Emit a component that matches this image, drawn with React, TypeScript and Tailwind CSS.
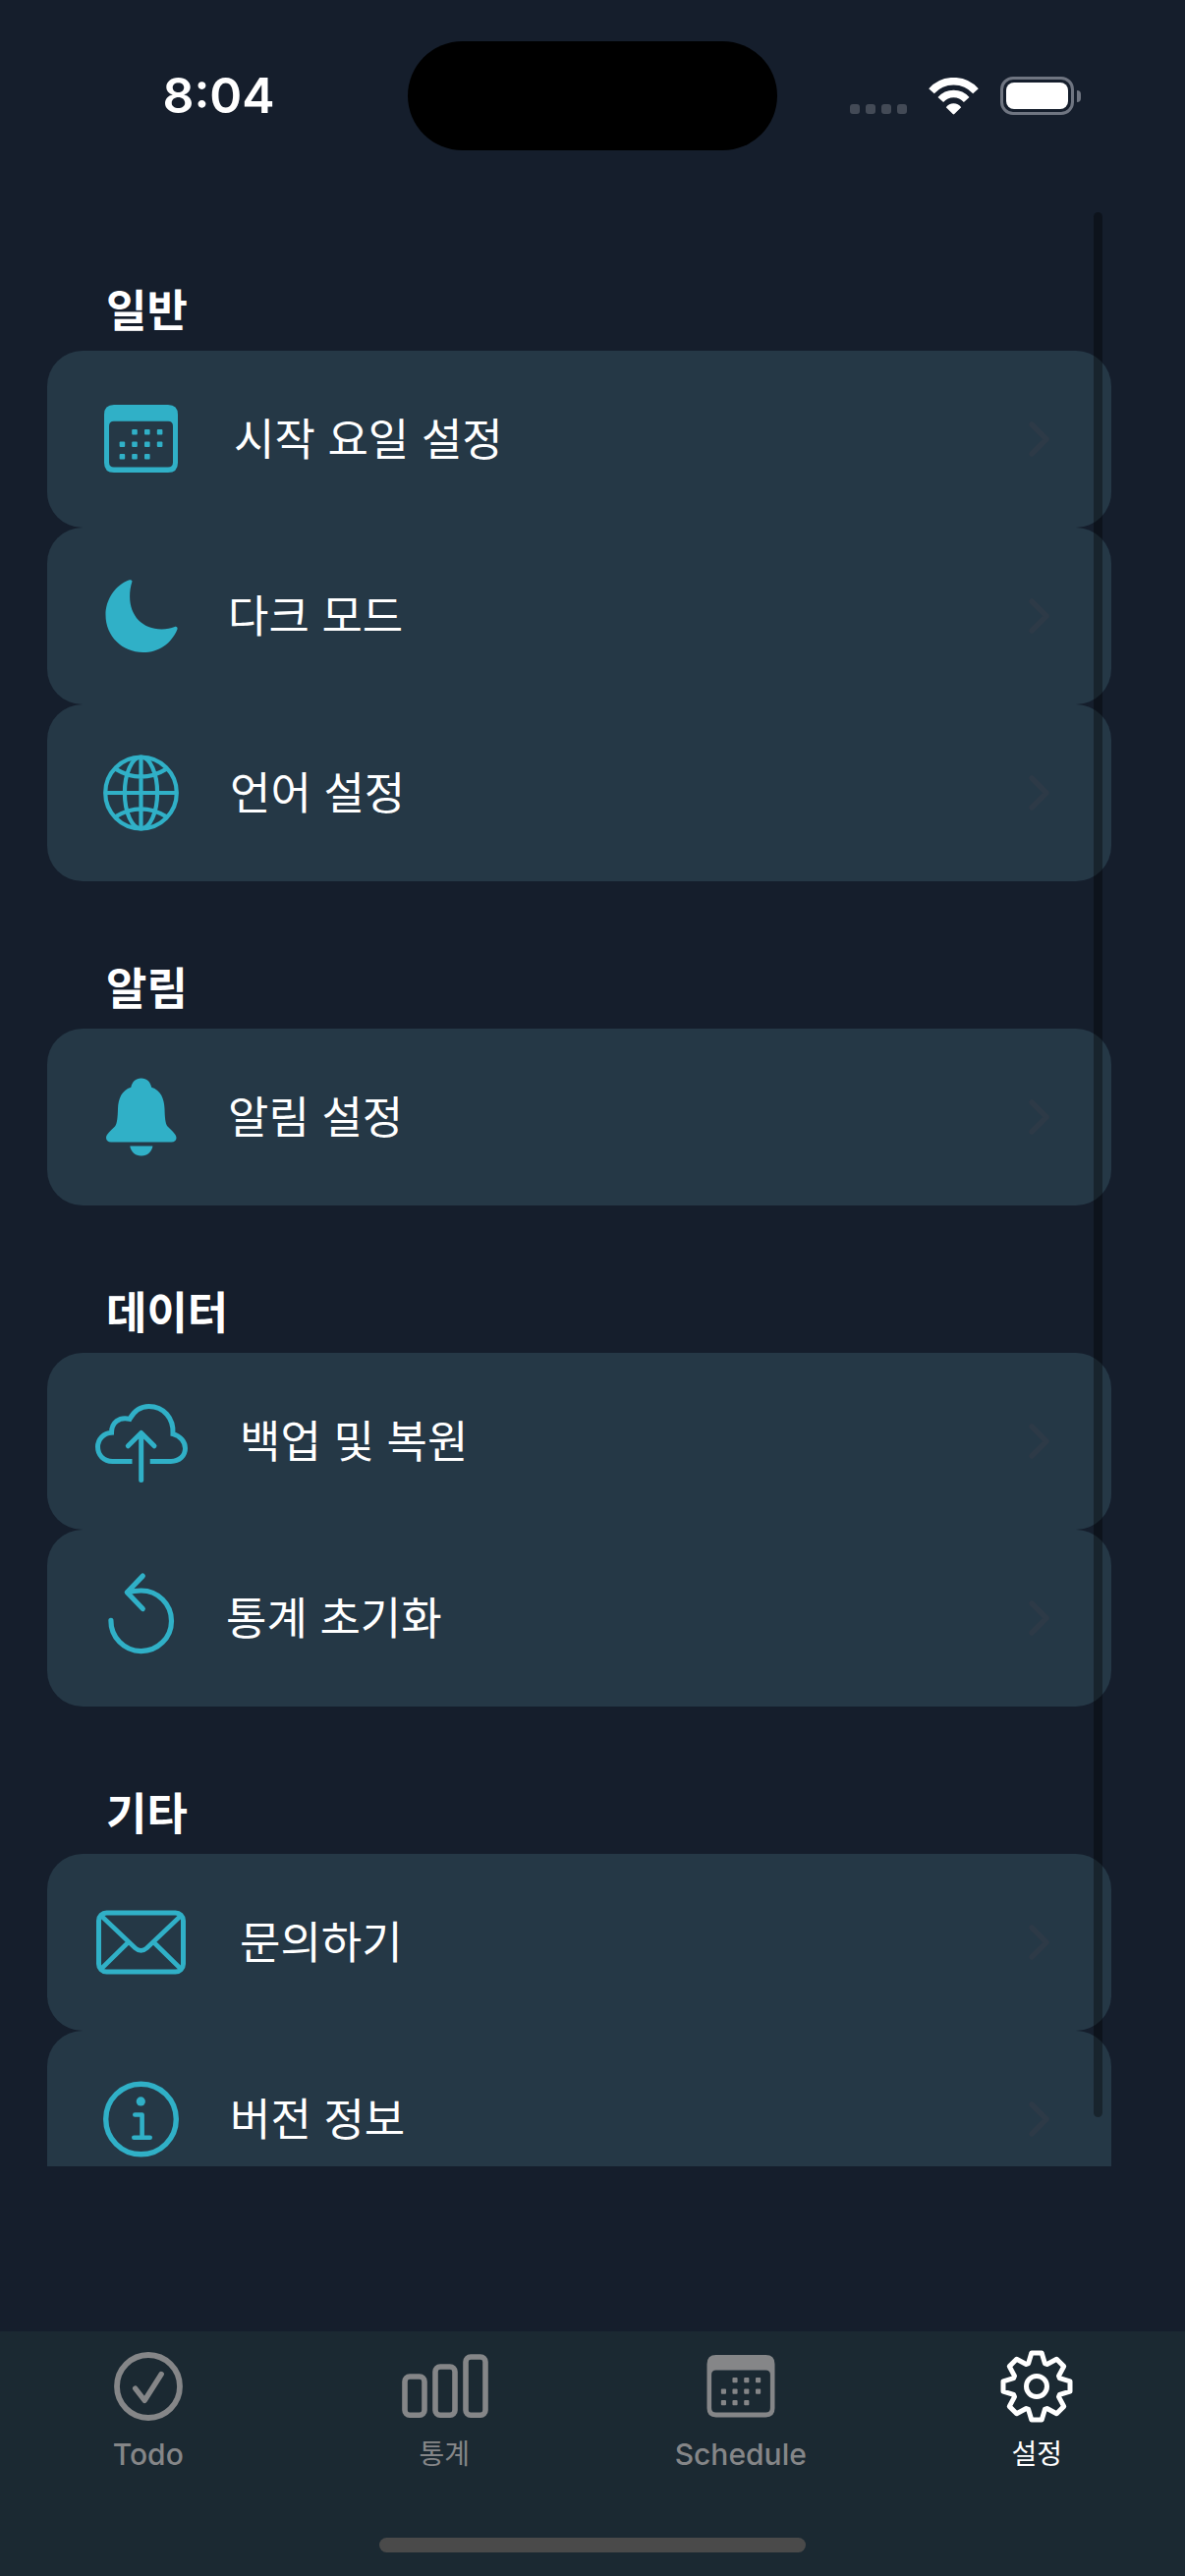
import type { ReactNode } from "react";

const FONT = "font-['Inter','Noto_Sans_CJK_KR',sans-serif]";

function Icon({ children }: { children: ReactNode }) {
  return (
    <svg
      viewBox="0 0 96 96"
      className="size-24 shrink-0 text-[#30b0c7]"
      fill="none"
      stroke="currentColor"
      strokeWidth="5"
      aria-hidden="true"
    >
      {children}
    </svg>
  );
}

/* Calendar glyph drawn on a 75 x 69 field, shared by the list and the tab bar. */
function CalendarShape() {
  const rows = [
    [28.2, 41, 53.8],
    [15.6, 28.2, 41, 53.8],
    [15.6, 28.2, 41],
  ];
  return (
    <g stroke="none" fill="currentColor">
      <path
        fillRule="evenodd"
        d="M10 0H65Q75 0 75 10V59Q75 69 65 69H10Q0 69 0 59V10Q0 0 10 0ZM10 16.8Q5 16.8 5 21.8V58.6Q5 63.6 10 63.6H65Q70 63.6 70 58.6V21.8Q70 16.8 65 16.8Z"
      />
      {rows.map((cols, r) =>
        cols.map((x) => (
          <rect key={`${r}-${x}`} x={x} y={25 + r * 12.5} width="5.6" height="5.6" rx="1" />
        )),
      )}
    </g>
  );
}

const icons = {
  calendar: (
    <Icon>
      <g transform="translate(10 13)">
        <CalendarShape />
      </g>
    </Icon>
  ),
  moon: (
    <Icon>
      <path
        transform="translate(11.5 11)"
        stroke="none"
        fill="currentColor"
        d="M26.8 2.5C25.3 7 24.6 12 24.6 17C24.6 37 37.5 50.4 57 50.4C62 50.4 66.5 49.2 70.3 48C72 47.5 73.6 48.5 73 50.4C67 65 54 74 38.2 74C17 74 0 57.5 0 36C0 20 10 5.5 24.3 0.3C26.3 -0.3 27.5 1 26.8 2.5Z"
      />
    </Icon>
  ),
  globe: (
    <Icon>
      <g transform="translate(9 9.5)" strokeWidth="4.2">
        <circle cx="38.5" cy="38.5" r="36.3" />
        <ellipse cx="38.5" cy="38.5" rx="16.6" ry="36.3" />
        <path d="M38.5 2V75M2 38.5H75M12.9 14.4Q38.5 30 64.1 14.4M12.9 62.6Q38.5 47 64.1 62.6" />
      </g>
    </Icon>
  ),
  bell: (
    <Icon>
      <g transform="translate(12 8.5)" stroke="none" fill="currentColor">
        <path d="M35.7 0C30 0 26.5 3.5 25.3 9.3C16 12 12.3 21 12 31C11.7 40 11.3 46 9 49C5 53 0 57 0 60.5C0 63.3 2 65 5 65H66.5C69.5 65 71.5 63.3 71.5 60.5C71.5 57 66.5 53 62.5 49C60.2 46 59.8 40 59.5 31C59.2 21 55.5 12 46.2 9.3C45 3.5 41.5 0 35.7 0Z" />
        <path d="M24.3 69H47.4C46.5 75 42 79 35.8 79C29.6 79 25.2 75 24.3 69Z" />
      </g>
    </Icon>
  ),
  cloud: (
    <Icon>
      <g transform="translate(1 10)">
        <path d="M37.5 58.4H17.5C8.5 58.4 2.5 52 2.5 43.8C2.5 36 8.5 29.5 16.5 29.2C16.5 19.5 24 12.5 35 15.3C39 8 46 2.5 54.5 2.5C69.5 2.5 80 14.5 79 30.6C86.5 32.5 91.5 38.5 91.5 45.3C91.5 52.8 85.5 58.4 77 58.4H55.7" />
        <path strokeLinecap="round" strokeLinejoin="round" d="M46.7 29.5V77.4M33.3 42.8L46.7 29.5L60 42.8" />
      </g>
    </Icon>
  ),
  reset: (
    <Icon>
      <g transform="translate(14 2.5)" strokeLinecap="round" strokeLinejoin="round" strokeWidth="5.2">
        <path d="M2.9 47.8A30.8 30.8 0 1 0 33.6 17.5Q26.5 17.5 20 19.3" />
        <path d="M35.3 2.6L19.3 19.3L35.3 36" />
      </g>
    </Icon>
  ),
  mail: (
    <Icon>
      <g transform="translate(2 15.5)">
        <rect x="2.5" y="2.5" width="86" height="60" rx="8" />
        <path d="M4.5 5L39.5 38.2Q45.5 43.5 51.5 38.2L86.5 5M5 59.5L33 32M86 59.5L58 32" strokeWidth="4.6" />
      </g>
    </Icon>
  ),
  info: (
    <Icon>
      <g transform="translate(9 9.5)">
        <circle cx="38.5" cy="38.5" r="35.8" strokeWidth="5.4" />
        <circle cx="38.3" cy="20.4" r="4.6" fill="currentColor" stroke="none" />
        <path d="M32.3 34H39.6V57.2M31.3 57.2H47.7" strokeWidth="4.6" strokeLinecap="round" strokeLinejoin="round" />
      </g>
    </Icon>
  ),
};

type Item = { label: string; icon: ReactNode; gap: string };

const sections: { title: string; items: Item[] }[] = [
  {
    title: "일반",
    items: [
      { label: "시작 요일 설정", icon: icons.calendar, gap: "ml-[46px]" },
      { label: "다크 모드", icon: icons.moon, gap: "ml-10" },
      { label: "언어 설정", icon: icons.globe, gap: "ml-[42px]" },
    ],
  },
  { title: "알림", items: [{ label: "알림 설정", icon: icons.bell, gap: "ml-10" }] },
  {
    title: "데이터",
    items: [
      { label: "백업 및 복원", icon: icons.cloud, gap: "ml-[52px]" },
      { label: "통계 초기화", icon: icons.reset, gap: "ml-[38px]" },
    ],
  },
  {
    title: "기타",
    items: [
      { label: "문의하기", icon: icons.mail, gap: "ml-[52px]" },
      { label: "버전 정보", icon: icons.info, gap: "ml-[42px]" },
    ],
  },
];

function Row({ label, icon, gap }: Item) {
  return (
    <li>
      <button
        type="button"
        className="flex h-[180px] w-full items-center rounded-[36px] bg-[#253846] pr-[61px] pl-12 text-left"
      >
        {icon}
        <span className={`${gap} flex-1 pt-0.5 text-[45px] leading-[60px] text-white`}>{label}</span>
        <svg viewBox="0 0 24 38" className="h-[38px] w-6" fill="none" stroke="#2d3a47" strokeWidth="5.5" strokeLinecap="round" strokeLinejoin="round" aria-hidden="true">
          <path d="M4 4L19 19L4 34" />
        </svg>
      </button>
    </li>
  );
}

function StatusBar() {
  return (
    <header className="grid h-[207px] shrink-0 grid-cols-[1fr_376px_1fr] items-start pt-[42px]">
      <div className="flex h-[111px] items-center justify-center pl-[30px] text-[50px] font-semibold text-white">
        8:04
      </div>
      <div className="h-[111px] rounded-full bg-black" />
      <div className="flex h-[111px] items-center justify-end gap-[22px] pr-[106px]">
        <div className="flex gap-1.5 pt-[26px]">
          <i className="size-2.5 rounded-[3px] bg-[#434a56]" />
          <i className="size-2.5 rounded-[3px] bg-[#434a56]" />
          <i className="size-2.5 rounded-[3px] bg-[#434a56]" />
          <i className="size-2.5 rounded-[3px] bg-[#434a56]" />
        </div>
        <svg viewBox="0 0 51 38" className="h-[38px] w-[51px]" fill="none" stroke="#fff" strokeWidth="7.5" aria-hidden="true">
          <path d="M3 13.7A30.2 30.2 0 0 1 48 13.7" />
          <path d="M12.3 22.5A17.6 17.6 0 0 1 38.7 22.5" />
          <path d="M17.8 30.2A9.5 9.5 0 0 1 33.2 30.2L26.3 37Q25.5 37.8 24.7 37Z" fill="#fff" stroke="none" />
        </svg>
        <div className="flex items-center gap-[3px]">
          <div className="h-[39px] w-[75px] rounded-[13px] border-3 border-[#6f7581] p-[3px]">
            <div className="h-full rounded-[8px] bg-white" />
          </div>
          <div className="h-3 w-1 rounded-r-full bg-[#6f7581]" />
        </div>
      </div>
    </header>
  );
}

const gearPoints = Array.from({ length: 8 }, (_, i) => i * 45)
  .flatMap((deg) => {
    const a = (deg * Math.PI) / 180;
    return [
      [-8.4, -23.4],
      [-5.2, -34],
      [5.2, -34],
      [8.4, -23.4],
    ].map(([x, y]) => `${(x * Math.cos(a) - y * Math.sin(a)).toFixed(2)},${(x * Math.sin(a) + y * Math.cos(a)).toFixed(2)}`);
  })
  .join(" ");

const LATIN = "text-[30px] font-medium";
const HANGUL = "text-[28px] font-normal";

const tabs = [
  {
    label: "Todo",
    text: LATIN,
    active: false,
    icon: (
      <svg viewBox="0 0 76 76" className="size-[76px]" fill="none" stroke="currentColor" strokeWidth="5.8" aria-hidden="true">
        <circle cx="38" cy="38" r="32" />
        <path d="M24.7 40.2L34.2 52.3L51.2 25.5" strokeLinecap="round" strokeLinejoin="round" strokeWidth="5.4" />
      </svg>
    ),
  },
  {
    label: "통계",
    text: HANGUL,
    active: false,
    icon: (
      <svg viewBox="0 0 90 76" className="h-[76px] w-[90px]" fill="none" stroke="currentColor" strokeWidth="5.6" aria-hidden="true">
        <rect x="5" y="28" width="20" height="39.2" rx="5" />
        <rect x="36" y="18" width="20" height="49.2" rx="5" />
        <rect x="67" y="8" width="20" height="59.2" rx="5" />
      </svg>
    ),
  },
  {
    label: "Schedule",
    text: LATIN,
    active: false,
    icon: (
      <svg viewBox="0 0 76 76" className="size-[76px]" aria-hidden="true">
        <g transform="translate(3.5 6) scale(.92)">
          <CalendarShape />
        </g>
      </svg>
    ),
  },
  {
    label: "설정",
    text: HANGUL,
    active: true,
    icon: (
      <svg viewBox="-38 -38 76 76" className="size-[76px]" fill="none" stroke="currentColor" strokeWidth="5" strokeLinejoin="round" aria-hidden="true">
        <polygon points={gearPoints} />
        <circle r="10.5" />
      </svg>
    ),
  },
];

function TabBar() {
  return (
    <nav className="flex h-[249px] shrink-0 flex-col justify-between bg-[#1b2932] pt-[18px] pb-6">
      <div className="grid grid-cols-4">
        {tabs.map((tab) => (
          <button
            key={tab.label}
            type="button"
            aria-current={tab.active ? "page" : undefined}
            className={`flex flex-col items-center gap-[13px] ${tab.active ? "text-white" : "text-[#858688]"}`}
          >
            {tab.icon}
            <span className={`leading-9 ${tab.text}`}>{tab.label}</span>
          </button>
        ))}
      </div>
      <div className="mx-auto h-[15px] w-[36%] rounded-full bg-[#4a4a4a]" />
    </nav>
  );
}

export default function App() {
  return (
    <div className={`flex h-screen flex-col bg-[#151e2c] ${FONT}`}>
      <StatusBar />
      <main className="relative mb-[168px] min-h-0 flex-1">
        <div className="h-full overflow-y-auto pr-[75px] pl-12 [scrollbar-width:none]">
          {sections.map((section) => (
            <section key={section.title}>
              <h2 className="flex h-[150px] items-end px-[60px] pb-2.5 text-[45px] leading-[60px] font-bold text-white">
                {section.title}
              </h2>
              <ul>
                {section.items.map((item) => (
                  <Row key={item.label} {...item} />
                ))}
              </ul>
            </section>
          ))}
        </div>
        <div className="absolute top-[9px] right-[84px] bottom-[50px] w-[9px] rounded-full bg-black/35" />
      </main>
      <TabBar />
    </div>
  );
}
